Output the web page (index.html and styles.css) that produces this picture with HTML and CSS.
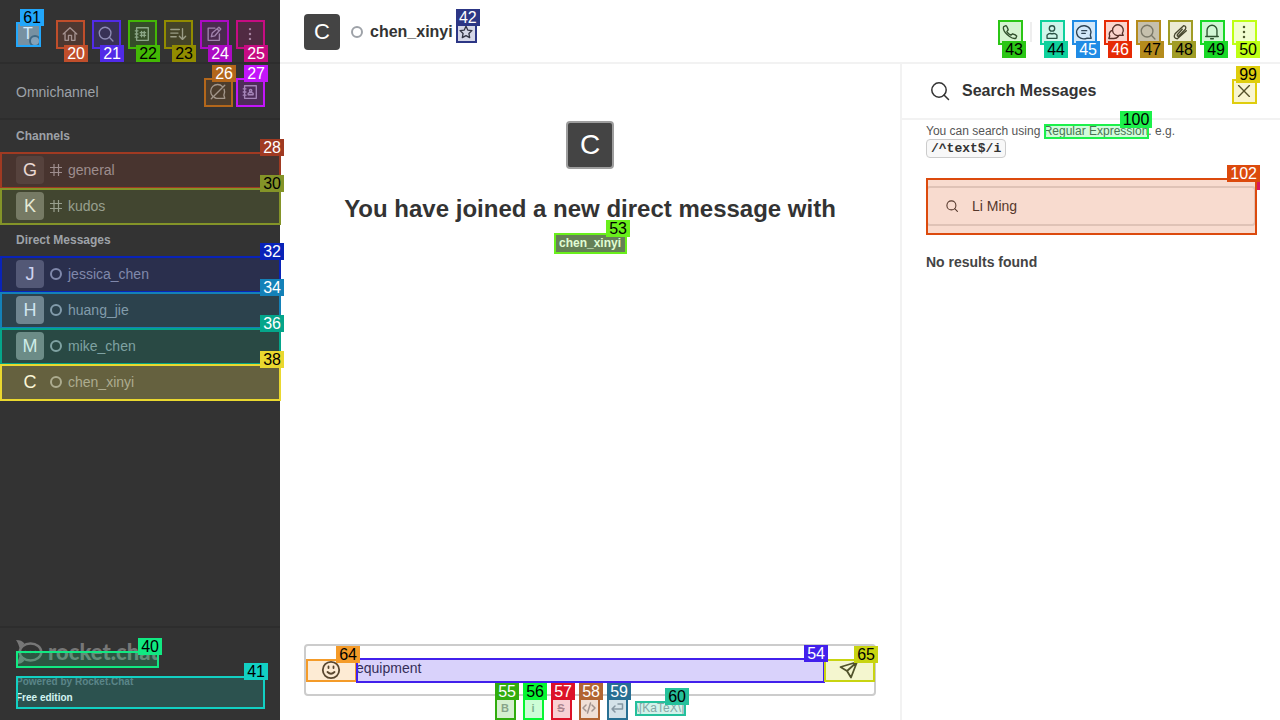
FILE: index.html
```html
<!DOCTYPE html>
<html lang="en">
<head>
<meta charset="utf-8">
<title>Rocket.Chat</title>
<link rel="stylesheet" href="styles.css">
</head>
<body>
<div class="app">
  <nav class="sidebar">
    <div class="side-top">
      <button class="me mark c61">T<i class="presence"></i><span class="tag">61</span></button>
      <div class="side-tools">
        <button class="tool mark below c20" aria-label="Home"><svg viewBox="0 0 20 20"><path d="M2.500 10 10 3l7.500 7M4.500 9.500V17h3.800v-5.500h3.400V17h3.800V9.500"/></svg><span class="tag">20</span></button>
        <button class="tool mark below c21" aria-label="Search"><svg viewBox="0 0 20 20"><circle cx="9" cy="9" r="6.500"/><path d="m13.700 13.700 4 4"/></svg><span class="tag">21</span></button>
        <button class="tool mark below c22" aria-label="Directory"><svg viewBox="0 0 20 20"><path d="M4 3h13v14H4zM2.500 6.500h3M2.500 10h3M2.500 13.500h3M9.500 7v6M12.500 7v6M8 8.500h6M8 11.500h6"/></svg><span class="tag">22</span></button>
        <button class="tool mark below c23" aria-label="Display"><svg viewBox="0 0 20 20"><path d="M2 5h9.500M2 9h8M2 13h6M15 4v12M11.500 12.500l3.500 3.500 3.500-3.500"/></svg><span class="tag">23</span></button>
        <button class="tool mark below c24" aria-label="Create new"><svg viewBox="0 0 20 20"><path d="M11 3.500H3.500v13.500H16V10M7 13l1-4 7.500-6.500 2 2L11 12zM13.500 4.500l2 2"/></svg><span class="tag">24</span></button>
        <button class="tool mark below c25" aria-label="Menu"><svg class="dots" viewBox="0 0 20 20"><circle cx="10" cy="4.500" r="1.300"/><circle cx="10" cy="10" r="1.300"/><circle cx="10" cy="15.500" r="1.300"/></svg><span class="tag">25</span></button>
      </div>
    </div>
    <div class="omni">
      <span class="omni-name">Omnichannel</span>
      <button class="tool mark c26" aria-label="Availability"><svg viewBox="0 0 20 20"><path d="M15 4A7.500 7.500 0 0 0 4 14.500M16.800 7a8 8 0 0 1-.3 6.500l1 3.500h-9q-1.500-.2-2.500-1M17.500 2.500l-15 15"/></svg><span class="tag">26</span></button>
      <button class="tool mark c27" aria-label="Contacts"><svg viewBox="0 0 20 20"><path d="M4 3h13v14H4zM2.500 6.500h3M2.500 10h3M2.500 13.500h3M8 13v-1.500l1.500-1h2.500l1.500 1V13z"/><circle cx="10.700" cy="8.500" r="1.300"/></svg><span class="tag">27</span></button>
    </div>
    <div class="rooms">
      <h2>Channels</h2>
      <a href="#" class="room mark c28"><span class="avatar g1">G</span><svg viewBox="0 0 12 12"><path d="M4 0v12M8.500 0v12M0 3.500h12M0 8.500h12"/></svg>general<span class="tag">28</span></a>
      <a href="#" class="room mark dark c30"><span class="avatar g3">K</span><svg viewBox="0 0 12 12"><path d="M4 0v12M8.500 0v12M0 3.500h12M0 8.500h12"/></svg>kudos<span class="tag">30</span></a>
      <h2>Direct Messages</h2>
      <a href="#" class="room mark c32"><span class="avatar g2">J</span><i class="ring"></i>jessica_chen<span class="tag">32</span></a>
      <a href="#" class="room mark c34"><span class="avatar g4">H</span><i class="ring"></i>huang_jie<span class="tag">34</span></a>
      <a href="#" class="room mark c36"><span class="avatar g4">M</span><i class="ring"></i>mike_chen<span class="tag">36</span></a>
      <a href="#" class="room selected mark dark c38"><span class="avatar g1">C</span><i class="ring"></i>chen_xinyi<span class="tag">38</span></a>
    </div>
    <footer class="side-foot">
      <a href="#" class="logo mark dark c40">
        <svg viewBox="0 0 27 24"><ellipse class="bubble" cx="14.500" cy="12" rx="10.800" ry="8.500"/><path d="M0 0c4 0 6.500 1 8.500 3.500L4 8.500C3 7.500 3 4 0 0zM0 24c4 0 6.500-1 8.500-3.500L4 15.500C3 16.500 3 20 0 24z"/><circle cx="9.500" cy="12" r="1.300"/><circle cx="14.500" cy="12" r="1.300"/><circle cx="19.500" cy="12" r="1.300"/></svg>
        <span class="word">rocket.chat</span><span class="tag">40</span>
      </a>
      <div class="edition mark dark c41"><span class="powered">Powered by Rocket.Chat</span><a href="#">Free edition</a><span class="tag">41</span></div>
    </footer>
  </nav>

  <main class="main">
    <header class="head">
      <span class="avatar big">C</span>
      <i class="ring grey"></i>
      <h1>chen_xinyi</h1>
      <button class="star mark c42" aria-label="Favorite"><svg viewBox="0 0 16 16"><path d="m8 1.500 2 4.300 4.800.6-3.500 3.300.9 4.800L8 12.200l-4.200 2.300.9-4.800L1.200 6.400 6 5.800z"/></svg><span class="tag">42</span></button>
      <div class="head-tools">
        <button class="act mark dark below c43" aria-label="Call"><svg viewBox="0 0 20 20"><path d="M3 4 5.500 3q1 0 2.500 4.500L6.500 9.500q1.500 2.500 4.500 4l2-1.500q3.500 1 4.500 2.500l-1 2.500q-3 1-7-2Q3.500 10.500 2.700 6.500 2.500 5 3 4z"/></svg><span class="tag">43</span></button>
        <i class="divider"></i>
        <button class="act mark dark below c44" aria-label="User info"><svg viewBox="0 0 20 20"><circle cx="10" cy="6" r="3"/><path d="M4.500 17v-3.500q1.500-2 3.500-2 2 1 4 0 2 0 3.500 2V17z"/></svg><span class="tag">44</span></button>
        <button class="act mark below c45" aria-label="Threads"><svg viewBox="0 0 20 20"><path d="M17 13.500a8 7.300 0 1 0-3.500 3.300l4.500.2zM7.500 8.500h5.500M7.500 11.500h4"/></svg><span class="tag">45</span></button>
        <button class="act mark below c46" aria-label="Discussion"><svg viewBox="0 0 20 20"><path d="M17 11.500A6 6 0 1 0 14.500 13.500l3.500.3zM5 8.500a5 5 0 0 0-2 6L2 17.200h5a6 5 0 0 0 5.500-2.200"/></svg><span class="tag">46</span></button>
        <button class="act pressed mark dark below c47" aria-label="Search messages"><svg viewBox="0 0 20 20"><circle cx="9" cy="9" r="6.500"/><path d="m13.700 13.700 4 4"/></svg><span class="tag">47</span></button>
        <button class="act mark dark below c48" aria-label="Files"><svg viewBox="0 0 20 20"><path d="m12.500 7-5.500 6q-.5 2.200 1.500 1.500L16 7q1.500-3.500-2-4L4.500 12q-2.500 5 2.500 5.500L17 8.500"/></svg><span class="tag">48</span></button>
        <button class="act mark dark below c49" aria-label="Notifications"><svg viewBox="0 0 20 20"><path d="M3 15h14M4.500 15V8a5.500 5.500 0 0 1 11 0v7M8.500 17.500h3"/></svg><span class="tag">49</span></button>
        <button class="act mark dark below c50" aria-label="More"><svg class="dots" viewBox="0 0 20 20"><circle cx="10" cy="4.500" r="1.400"/><circle cx="10" cy="10" r="1.400"/><circle cx="10" cy="15.500" r="1.400"/></svg><span class="tag">50</span></button>
      </div>
    </header>
    <div class="body">
      <section class="chat">
        <div class="intro">
          <span class="avatar huge">C</span>
          <h2>You have joined a new direct message with</h2>
          <a href="#" class="user mark dark c53">chen_xinyi<span class="tag">53</span></a>
        </div>
        <form class="composer">
          <div class="box">
            <button type="button" class="side-btn mark dark c64" aria-label="Emoji"><svg viewBox="0 0 20 20"><circle cx="10" cy="10" r="8.200"/><path d="M6.500 12q3.500 3.500 7 0M7.500 6.500v1.500M12.500 6.500v1.500"/></svg><span class="tag">64</span></button>
            <div class="field mark c54"><textarea aria-label="Message" rows="1">equipment</textarea><span class="tag">54</span></div>
            <button type="button" class="side-btn mark dark c65" aria-label="Send"><svg viewBox="0 0 20 20"><path d="M18 2 1.500 7 8 11l4 6.500zM18 2 8 11"/></svg><span class="tag">65</span></button>
          </div>
          <div class="format">
            <button type="button" class="fmt mark c55">B<span class="tag">55</span></button>
            <button type="button" class="fmt mark dark c56">i<span class="tag">56</span></button>
            <button type="button" class="fmt mark c57"><s>S</s><span class="tag">57</span></button>
            <button type="button" class="fmt mark c58" aria-label="Code"><svg viewBox="0 0 14 12"><path d="M4 3 1 6l3 3M10 3l3 3-3 3M8.500 1l-3 10"/></svg><span class="tag">58</span></button>
            <button type="button" class="fmt mark c59" aria-label="Multi-line"><svg viewBox="0 0 14 12"><path d="M8 2h4.500v5H2M5 4 2 7l3 3"/></svg><span class="tag">59</span></button>
            <a href="#" class="katex mark dark c60"><span class="katex-text">\[KaTeX\]</span><span class="tag">60</span></a>
          </div>
        </form>
      </section>
      <aside class="panel">
        <header class="panel-head">
          <svg viewBox="0 0 20 20"><circle cx="9" cy="9" r="7.200"/><path d="m14 14 4.500 4.500"/></svg>
          <h2>Search Messages</h2>
          <button class="act mark dark c99" aria-label="Close"><svg viewBox="0 0 20 20"><path d="m4 4 12 12M16 4 4 16"/></svg><span class="tag">99</span></button>
        </header>
        <div class="panel-body">
          <p>You can search using <a href="#" class="mark dark c100">Regular Expression<span class="tag">100</span></a>. e.g. <code>/^text$/i</code></p>
          <div class="search mark c102">
            <i class="edge"></i>
            <label class="search-box"><svg viewBox="0 0 20 20"><circle cx="9" cy="9" r="7.500"/><path d="m14.500 14.500 4.500 4.500"/></svg><input type="text" value="Li Ming" aria-label="Search Messages"></label>
            <span class="tag">102</span>
          </div>
          <h3>No results found</h3>
        </div>
      </aside>
    </div>
  </main>
</div>
</body>
</html>
```
FILE: styles.css
```css
* { box-sizing: border-box; }
body { margin: 0; font-family: "Liberation Sans", Arial, sans-serif; font-size: 14px; line-height: 20px; color: #333; background: #fff; }
button, input, textarea { font: inherit; color: inherit; border: 0; padding: 0; margin: 0; background: none; }
a { color: inherit; text-decoration: none; }
h1, h2, h3, p { margin: 0; }
svg { display: block; width: 20px; height: 20px; flex: none; fill: none; stroke: currentColor; stroke-width: 1.5; stroke-linejoin: round; stroke-linecap: round; }
svg.dots { fill: currentColor; stroke: none; }

.app { display: flex; height: 100vh; overflow: hidden; }

/* Numbered element markers */
.mark { position: relative; }
.mark::after { content: ""; position: absolute; z-index: 1; inset: 0 -1px -1px 0; border: 2px solid var(--c); background: color-mix(in srgb, var(--c) 20%, transparent); background-clip: padding-box; pointer-events: none; }
.tag { position: absolute; z-index: 3; top: -13px; right: -4px; height: 17px; padding: 0 3px; font-size: 16px; font-weight: 400; line-height: 17px; color: #fff; background: var(--c); }
.dark > .tag { color: #000; }
.below > .tag { top: auto; bottom: -14px; }
.c20 { --c: #c04e2b; } .c21 { --c: #512be8; } .c22 { --c: #43b805; } .c23 { --c: #928c00; }
.c24 { --c: #ac0bc4; } .c25 { --c: #c60c83; } .c26 { --c: #b3671b; } .c27 { --c: #c315fa; }
.c28 { --c: #a03a22; } .c30 { --c: #849428; } .c32 { --c: #0923b8; } .c34 { --c: #1481b8; }
.c36 { --c: #05a58a; } .c38 { --c: #ead82f; } .c40 { --c: #11e982; } .c41 { --c: #12d0c3; }
.c42 { --c: #2c3685; } .c43 { --c: #2bc615; } .c44 { --c: #0ed09c; } .c45 { --c: #208be5; }
.c46 { --c: #e62a05; } .c47 { --c: #b48b1c; } .c48 { --c: #a09c25; } .c49 { --c: #19d827; }
.c50 { --c: #beff14; } .c53 { --c: #6aef1c; } .c54 { --c: #4220ec; } .c55 { --c: #31ad0d; }
.c56 { --c: #05f631; } .c57 { --c: #dc1229; } .c58 { --c: #b26532; } .c59 { --c: #276f93; }
.c60 { --c: #25c09b; } .c61 { --c: #22a7fb; } .c64 { --c: #f49b29; } .c65 { --c: #c8d411; }
.c99 { --c: #dfcd0e; } .c100 { --c: #1cf14b; } .c102 { --c: #dc4a0d; }
.c22 > .tag, .c23 > .tag, .c61 > .tag { color: #000; }

/* Sidebar */
.sidebar { display: flex; flex-direction: column; width: 280px; flex: none; color: #9ea2a8; background: #333; }
.side-top { display: flex; align-items: center; justify-content: space-between; height: 64px; padding: 6px 16px 0; border-bottom: 2px solid #2d2d2d; }
.side-tools { display: flex; gap: 8px; }
.me { width: 24px; height: 24px; font-size: 16px; line-height: 24px; color: #fff; background: #8c8c8c; }
.me::after { background: color-mix(in srgb, var(--c) 20%, transparent); }
.presence { position: absolute; right: -1px; bottom: -1px; width: 12px; height: 12px; border: 2px solid #4a5a66; border-radius: 50%; background: #9ea2a8; }
.tool { display: grid; place-items: center; width: 28px; height: 28px; flex: none; }
.tool svg { width: 18px; height: 18px; }
.omni { display: flex; align-items: center; gap: 4px; height: 56px; padding: 2px 16px 0; border-bottom: 2px solid #2d2d2d; }
.omni-name { flex: 1; }
.rooms { flex: 1; }
.rooms h2 { padding: 0 16px; font-size: 12px; line-height: 32px; }
.room { display: flex; align-items: center; gap: 6px; height: 36px; padding: 0 16px; }
.room svg { width: 12px; height: 12px; stroke-width: 1.2; }
.selected { background: #444; }
.avatar { display: grid; place-items: center; width: 28px; height: 28px; flex: none; border-radius: 4px; font-size: 18px; color: #fff; }
.g1 { background: #444; } .g2 { background: #666; } .g3 { background: #747474; } .g4 { background: #868686; }
.ring { width: 12px; height: 12px; flex: none; border: 2px solid currentColor; border-radius: 50%; }
.grey { color: #9ea2a8; }
.side-foot { min-height: 94px; padding: 12px 16px 10px; border-top: 2px solid #2d2d2d; }
.logo { display: flex; align-items: center; gap: 5px; width: 142px; height: 24px; color: #777; }
.logo::after { top: 11px; bottom: -4px; }
.logo > .tag { top: -2px; }
.logo svg { width: 27px; height: 24px; fill: currentColor; stroke: none; }
.logo .bubble { fill: none; stroke: currentColor; stroke-width: 2.4; }
.word { font-family: Lato, sans-serif; font-size: 22px; font-weight: 900; line-height: 24px; }
.edition { display: flex; flex-direction: column; height: 32px; margin-top: 12px; padding-bottom: 4px; font-size: 10px; font-weight: 700; line-height: 16px; color: #fff; justify-content: center; }
.powered { color: #6c727a; }

/* Room header */
.main { display: flex; flex-direction: column; flex: 1; min-width: 0; }
.head { display: flex; align-items: center; height: 64px; flex: none; padding: 2px 24px 0; border-bottom: 2px solid #f2f2f2; }
.big { width: 36px; height: 36px; margin-right: 11px; font-size: 22px; background: #444; }
.head h1 { margin: 0 3px 0 7px; font-size: 16px; line-height: 24px; }
.star { display: grid; place-items: center; width: 20px; height: 20px; }
.star svg { width: 14px; height: 14px; }
.head-tools { display: flex; align-items: center; gap: 8px; margin-left: auto; }
.act { display: grid; place-items: center; width: 24px; height: 24px; }
.act svg { width: 18px; height: 18px; }
.pressed { color: #6c727a; background: #cbced1; }
.divider { width: 2px; height: 20px; background: #eee; }
.body { display: flex; flex: 1; min-height: 0; }

/* Conversation */
.chat { display: flex; flex-direction: column; flex: 1; min-width: 0; }
.intro { display: flex; flex: 1; flex-direction: column; align-items: center; padding-top: 57px; }
.huge { width: 48px; height: 48px; border: 2px solid #9e9e9e; font-size: 28px; background: #444; }
.intro h2 { margin: 24px 0 8px; font-size: 24px; line-height: 32px; }
.user { height: 20px; padding: 0 5px; font-size: 12px; font-weight: 700; line-height: 20px; color: #fff; background: #646464; }
.composer { padding: 0 24px; }
.box { display: flex; align-items: center; height: 52px; border: 2px solid #ccc; border-radius: 4px; }
.side-btn { display: grid; place-items: center; width: 50px; height: 22px; }
.side-btn svg { stroke-width: 1.8; }
.field { display: flex; flex: 1; height: 24px; }
.field textarea { width: 100%; height: 24px; line-height: 20px; resize: none; outline: 0; overflow: hidden; }
.format { display: flex; justify-content: center; gap: 8px; height: 24px; }
.fmt { display: grid; place-items: center; width: 20px; height: 24px; font-size: 11px; font-weight: 700; line-height: 16px; color: #9ea2a8; }
.fmt::after { bottom: 0; }
.fmt svg { width: 14px; height: 12px; }
.katex { display: flex; justify-content: center; align-self: center; width: 50px; height: 14px; font-size: 12px; line-height: 14px; color: #9ea2a8; }
.katex-text { white-space: nowrap; }

/* Search panel */
.panel { width: 380px; flex: none; border-left: 2px solid #f2f2f2; }
.panel-head { display: flex; align-items: center; gap: 12px; height: 56px; padding: 0 24px 0 28px; border-bottom: 2px solid #f2f2f2; }
.panel-head h2 { flex: 1; font-size: 16px; line-height: 24px; }
.panel-body { padding: 3px 24px; }
.panel p { width: 280px; font-size: 12px; line-height: 16px; color: #555; }
.panel code { display: inline-block; padding: 0 4px; border: 1px solid #ccc; border-radius: 4px; font-family: "Liberation Mono", monospace; font-size: 13px; font-weight: 700; line-height: 17px; color: #333; background: #f8f8f8; }
.search { margin-top: 20px; padding: 8px 0; }
.edge { position: absolute; top: 4px; right: -4px; width: 3px; height: 8px; background: #d8195e; }
.search-box { display: flex; align-items: center; gap: 14px; height: 40px; padding: 0 18px; border: 2px solid #e0e0e0; border-radius: 4px; }
.search-box svg { width: 12px; height: 12px; stroke-width: 1.8; }
.search-box input { flex: 1; min-width: 0; outline: 0; }
.panel h3 { margin-top: 18px; font-size: 14px; line-height: 20px; color: #444; }
```
